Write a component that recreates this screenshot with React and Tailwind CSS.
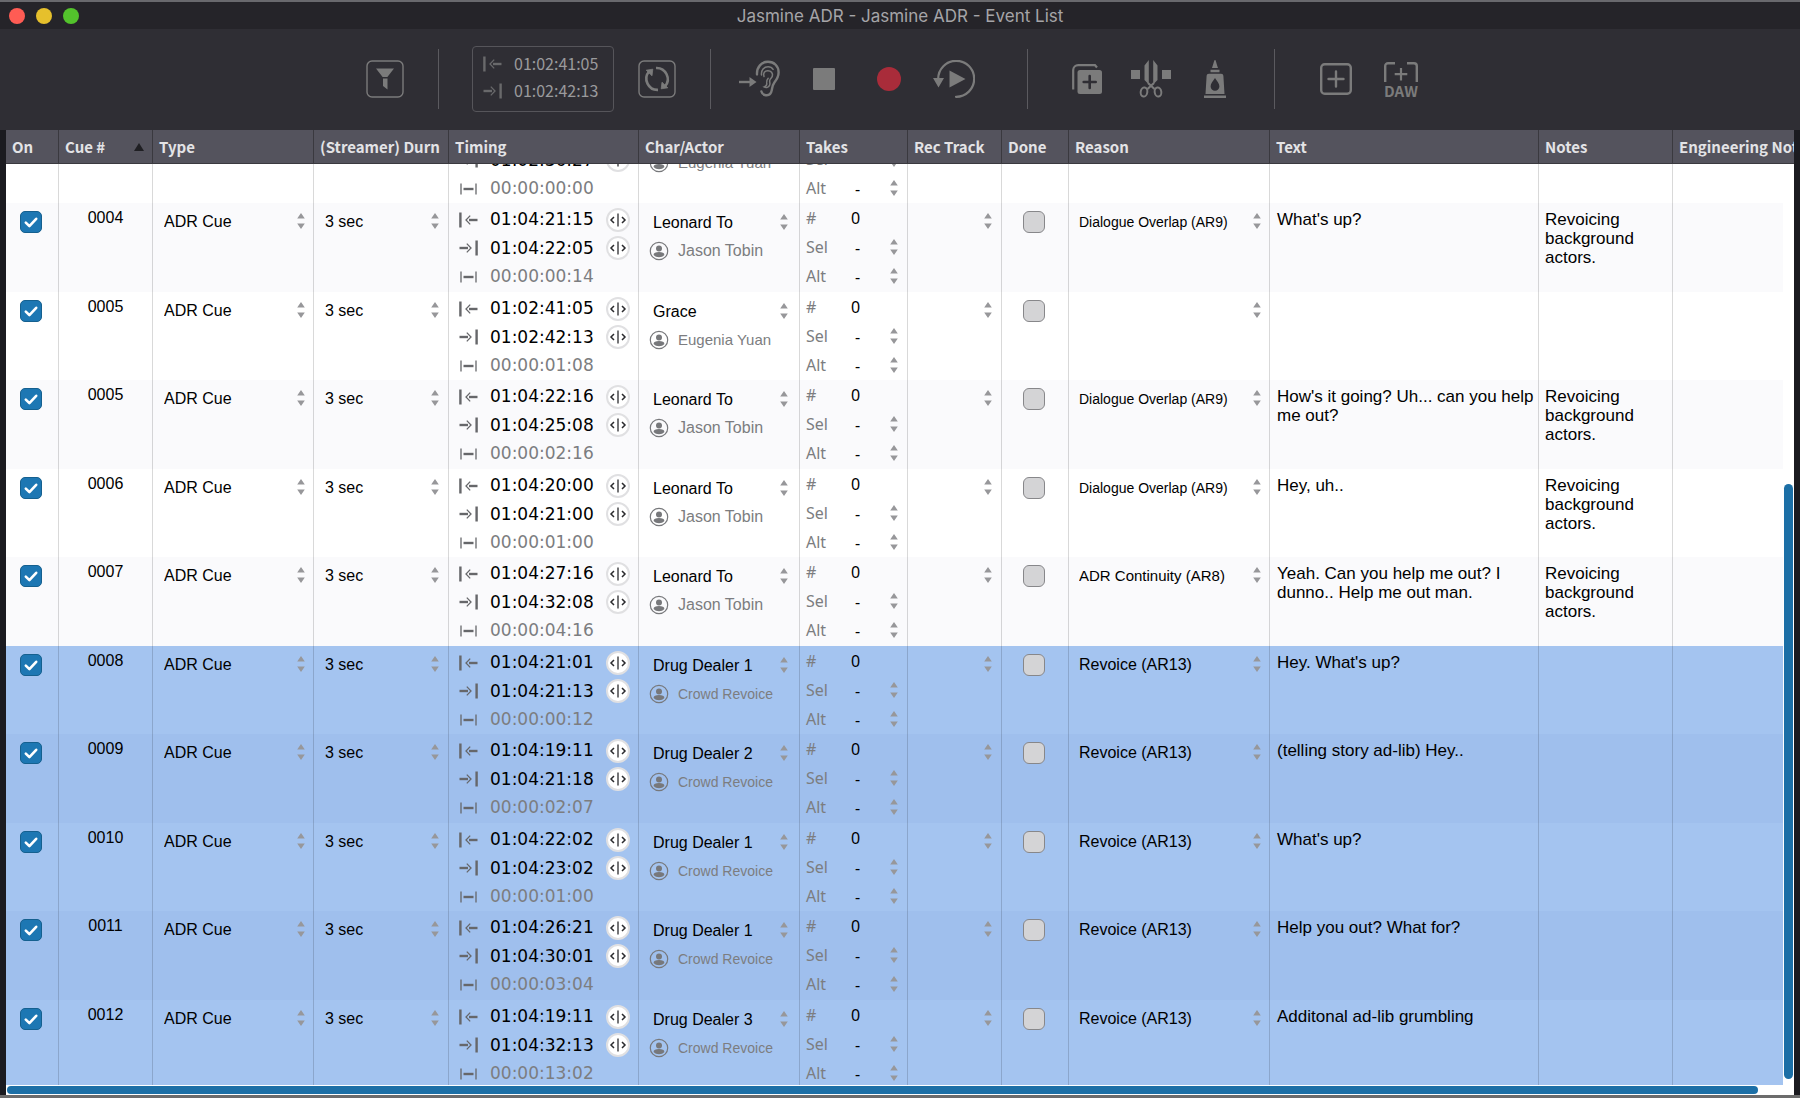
import React, { useLayoutEffect, useRef, useState } from 'react'

const COLUMNS = [
  { name: 'On', width: 'w-[53px]' },
  { name: 'Cue #', width: 'w-[94px]', sorted: true },
  { name: 'Type', width: 'w-[161px]' },
  { name: '(Streamer) Durn', width: 'w-[135px]' },
  { name: 'Timing', width: 'w-[190px]' },
  { name: 'Char/Actor', width: 'w-[161px]' },
  { name: 'Takes', width: 'w-[108px]' },
  { name: 'Rec Track', width: 'w-[94px]' },
  { name: 'Done', width: 'w-[67px]' },
  { name: 'Reason', width: 'w-[201px]' },
  { name: 'Text', width: '' },
  { name: 'Notes', width: 'w-[134px]' },
  { name: 'Engineering Notes', width: 'w-[121px]' }
]

const BACKGROUND = 'Revoicing background actors.'

const CUES = [
  { cue: '0003', start: '01:02:36:27', end: '01:02:36:27', length: '00:00:00:00', character: 'Grace', actor: 'Eugenia Yuan', reason: '', text: '', notes: '' },
  { cue: '0004', start: '01:04:21:15', end: '01:04:22:05', length: '00:00:00:14', character: 'Leonard To', actor: 'Jason Tobin', reason: 'Dialogue Overlap (AR9)', text: "What's up?", notes: BACKGROUND },
  { cue: '0005', start: '01:02:41:05', end: '01:02:42:13', length: '00:00:01:08', character: 'Grace', actor: 'Eugenia Yuan', reason: '', text: '', notes: '' },
  { cue: '0005', start: '01:04:22:16', end: '01:04:25:08', length: '00:00:02:16', character: 'Leonard To', actor: 'Jason Tobin', reason: 'Dialogue Overlap (AR9)', text: "How's it going? Uh... can you help me out?", notes: BACKGROUND },
  { cue: '0006', start: '01:04:20:00', end: '01:04:21:00', length: '00:00:01:00', character: 'Leonard To', actor: 'Jason Tobin', reason: 'Dialogue Overlap (AR9)', text: 'Hey, uh..', notes: BACKGROUND },
  { cue: '0007', start: '01:04:27:16', end: '01:04:32:08', length: '00:00:04:16', character: 'Leonard To', actor: 'Jason Tobin', reason: 'ADR Continuity (AR8)', text: 'Yeah. Can you help me out? I dunno.. Help me out man.', notes: BACKGROUND },
  { cue: '0008', start: '01:04:21:01', end: '01:04:21:13', length: '00:00:00:12', character: 'Drug Dealer 1', actor: 'Crowd Revoice', reason: 'Revoice (AR13)', text: "Hey. What's up?", notes: '', selected: true },
  { cue: '0009', start: '01:04:19:11', end: '01:04:21:18', length: '00:00:02:07', character: 'Drug Dealer 2', actor: 'Crowd Revoice', reason: 'Revoice (AR13)', text: '(telling story ad-lib) Hey..', notes: '', selected: true },
  { cue: '0010', start: '01:04:22:02', end: '01:04:23:02', length: '00:00:01:00', character: 'Drug Dealer 1', actor: 'Crowd Revoice', reason: 'Revoice (AR13)', text: "What's up?", notes: '', selected: true },
  { cue: '0011', start: '01:04:26:21', end: '01:04:30:01', length: '00:00:03:04', character: 'Drug Dealer 1', actor: 'Crowd Revoice', reason: 'Revoice (AR13)', text: 'Help you out? What for?', notes: '', selected: true },
  { cue: '0012', start: '01:04:19:11', end: '01:04:32:13', length: '00:00:13:02', character: 'Drug Dealer 3', actor: 'Crowd Revoice', reason: 'Revoice (AR13)', text: 'Additonal ad-lib grumbling', notes: '', selected: true }
]

function fitSize(text, limit) {
  const over = text.length - limit
  if (over <= 1) return 'text-base'
  if (over === 2) return 'text-[15px]'
  return 'text-sm'
}

function Stepper() {
  return (
    <svg className="w-2 h-4 text-[#97979a]" viewBox="0 0 8 16" fill="currentColor">
      <path d="M4 0l3.8 5.6H.2zM4 16l3.8-5.6H.2z" />
    </svg>
  )
}

function Picker({ label, value, size = 'text-base', className = '' }) {
  return (
    <span className={`grid items-center ${className}`}>
      <select
        aria-label={label}
        defaultValue={value}
        className={`[grid-area:1/1] w-full h-[22px] pt-[2px] appearance-none bg-transparent outline-none leading-5 text-black ${size}`}
      >
        <option>{value}</option>
      </select>
      <span className="[grid-area:1/1] justify-self-end pointer-events-none"><Stepper /></span>
    </span>
  )
}

function OnBox({ label }) {
  return (
    <span className="grid w-[22px] h-[22px] place-items-center">
      <input type="checkbox" defaultChecked aria-label={label} className="peer [grid-area:1/1] appearance-none w-[22px] h-[22px] rounded-[5px] border border-[#15608f] bg-[#d4d4d6] checked:bg-[#1d77b3]" />
      <svg className="[grid-area:1/1] w-4 h-4 pointer-events-none opacity-0 peer-checked:opacity-100" viewBox="0 0 16 16" fill="none" stroke="white" strokeWidth="2.6" strokeLinecap="round" strokeLinejoin="round">
        <path d="M2.8 8.6l3.6 3.6 6.8-7.4" />
      </svg>
    </span>
  )
}

function StartIcon({ className = '' }) {
  return (
    <svg className={`w-[19px] h-4 ${className}`} viewBox="0 0 19 16" fill="none" stroke="currentColor">
      <path d="M1.4 0.5v15" strokeWidth="2.4" />
      <path d="M11.2 3.6L7 8l4.200 4.400" strokeWidth="1.3" />
      <path d="M10 8h8.500" strokeWidth="2.4" />
    </svg>
  )
}

function EndIcon({ className = '' }) {
  return (
    <svg className={`w-[19px] h-4 ${className}`} viewBox="0 0 19 16" fill="none" stroke="currentColor">
      <path d="M17.600 0.500v15" strokeWidth="2.400" />
      <path d="M7.800 3.600L12 8l-4.200 4.400" strokeWidth="1.300" />
      <path d="M0.500 8h8.500" strokeWidth="2.400" />
    </svg>
  )
}

function LengthIcon() {
  return (
    <svg className="w-[19px] h-4 text-[#66676a]" viewBox="0 0 19 16" fill="none" stroke="currentColor">
      <path d="M2 2.500v11M17 2.500v11" strokeWidth="1.300" />
      <path d="M4.500 8h10" strokeWidth="2.400" />
    </svg>
  )
}

function CaptureButton({ label }) {
  return (
    <button type="button" aria-label={label} className="ml-auto w-6 h-6 rounded-full border-2 border-[#e0e0e2] bg-white text-[#2b2b2e]">
      <svg className="w-5 h-5" viewBox="0 0 20 20" fill="none" stroke="currentColor">
        <path d="M10 3.5v13" strokeWidth="1.3" />
        <path d="M6 7L3 10l3 3M14 7l3 3-3 3" strokeWidth="1.5" />
      </svg>
    </button>
  )
}

function ActorIcon() {
  return (
    <svg className="w-5 h-5 shrink-0 text-[#77787b]" viewBox="0 0 20 20">
      <circle cx="10" cy="10" r="8.7" fill="none" stroke="currentColor" strokeWidth="1.2" />
      <circle cx="10" cy="7.4" r="3" fill="currentColor" />
      <path d="M4.600 14c0-2.200 2-3 5.400-3s5.400.8 5.400 3c-1.400 1.500-3.200 2.200-5.400 2.200S6 15.500 4.600 14z" fill="currentColor" />
    </svg>
  )
}

function CueRow({ cue }) {
  const cell = 'p-0 align-top border-r border-black/15'
  const rowColor = cue.selected
    ? 'odd:bg-[#a4c4f0] even:bg-[#9fbfed]'
    : 'odd:bg-white even:bg-[#fafafc]'
  return (
    <tr className={`even:h-[89px] odd:h-[88px] ${rowColor}`}>
      <td className={cell}>
        <div className="pt-2 pl-[14px]"><OnBox label={`Cue ${cue.cue} on`} /></div>
      </td>
      <td className={`${cell} text-center`}>
        <div className="pt-[3px] leading-6">{cue.cue}</div>
      </td>
      <td className={cell}>
        <Picker label="Type" value="ADR Cue" className="pt-[7px] pl-[11px] pr-2" />
      </td>
      <td className={cell}>
        <Picker label="Streamer duration" value="3 sec" className="pt-[7px] pl-[11px] pr-[9px]" />
      </td>
      <td className={cell}>
        <div className="grid grid-rows-3 h-[88px] pt-[3px] pl-[10px] pr-3 font-['DejaVu_Sans',sans-serif] text-[17px]">
          <div className="flex items-center gap-3">
            <StartIcon className="text-[#66676a]" />
            <span>{cue.start}</span>
            <CaptureButton label="Capture start" />
          </div>
          <div className="flex items-center gap-3">
            <EndIcon className="text-[#66676a]" />
            <span>{cue.end}</span>
            <CaptureButton label="Capture end" />
          </div>
          <div className="flex items-center gap-3">
            <LengthIcon />
            <span className="text-[#7c7d80]">{cue.length}</span>
          </div>
        </div>
      </td>
      <td className={cell}>
        <Picker label="Character" value={cue.character} className="pt-2 pl-[14px] pr-[11px]" />
        <div className="flex items-center gap-[9px] pt-2 pl-[10px] text-[#7c7d80]">
          <ActorIcon />
          <span className={`leading-5 whitespace-nowrap ${fitSize(cue.actor, 10)}`}>{cue.actor}</span>
        </div>
      </td>
      <td className={cell}>
        <div className="grid grid-rows-3 h-[88px] pb-px pl-[6px] pr-[9px] font-['Noto_Sans',sans-serif] text-[#7c7d80]">
          <div className="flex items-center">
            <span className="w-[45px]">#</span>
            <span className="text-black">0</span>
          </div>
          <div className="flex items-center">
            <span className="w-[49px]">Sel</span>
            <Picker label="Selected take" value="-" className="flex-1" />
          </div>
          <div className="flex items-center">
            <span className="w-[49px]">Alt</span>
            <Picker label="Alternate take" value="-" className="flex-1" />
          </div>
        </div>
      </td>
      <td className={cell}>
        <Picker label="Record track" value="" className="pt-[7px] pl-2 pr-[9px]" />
      </td>
      <td className={cell}>
        <div className="pt-2 pl-[21px]">
          <input type="checkbox" aria-label={`Cue ${cue.cue} done`} className="block appearance-none w-[22px] h-[22px] rounded-md border border-[#87878a] bg-[#d4d4d6] checked:bg-[#1d77b3]" />
        </div>
      </td>
      <td className={cell}>
        <Picker label="Reason" value={cue.reason} size={fitSize(cue.reason, 18)} className="pt-[7px] pl-[10px] pr-2" />
      </td>
      <td className={cell}>
        <p className="pt-[7px] pl-[7px] text-[17px] leading-[19px]">{cue.text}</p>
      </td>
      <td className={cell}>
        <p className="pt-[7px] pl-[6px] pr-4 text-[17px] leading-[19px]">{cue.notes}</p>
      </td>
      <td className="p-0"></td>
    </tr>
  )
}

function ToolButton({ label, children }) {
  return (
    <button type="button" aria-label={label} title={label} className="w-[42px] h-[42px] flex items-center justify-center">
      {children}
    </button>
  )
}

function Divider({ className }) {
  return <div className={`w-px h-[60px] bg-[#5b5a5f] ${className}`}></div>
}

function Toolbar() {
  return (
    <div className="h-[101px] shrink-0 bg-[#2f2e34] text-[#7b7b7b] flex items-center justify-center pr-[14px] pb-px">
      <ToolButton label="Filter">
        <svg className="w-[38px] h-[38px]" viewBox="0 0 38 38">
          <rect x="1" y="1" width="36" height="36" rx="5" fill="none" stroke="currentColor" strokeWidth="1.4" />
          <path d="M10 8.500h18l-6.600 8.500h-4.800zM17 18.500h4.500v11l-4.500-3.500z" fill="currentColor" />
        </svg>
      </ToolButton>
      <Divider className="ml-8 mr-[33px]" />
      <div className="w-[142px] h-[66px] rounded border border-[#56555a] flex flex-col justify-center pl-[10px] pb-1 font-['Noto_Sans_CJK_SC',sans-serif] text-base leading-[27px] text-[#9a9a9c]">
        <div className="flex items-center gap-3">
          <StartIcon className="text-[#69696b]" />
          <span>01:02:41:05</span>
        </div>
        <div className="flex items-center gap-3">
          <EndIcon className="text-[#69696b]" />
          <span>01:02:42:13</span>
        </div>
      </div>
      <div className="ml-[22px]">
        <ToolButton label="Refresh">
          <svg className="w-[38px] h-[38px]" viewBox="0 0 38 38" fill="none" stroke="currentColor">
            <rect x="1" y="1" width="36" height="36" rx="5" strokeWidth="1.4" />
            <path d="M20 29.900A11.200 11.200 0 0 1 11 11.500M18 8A11.200 11.200 0 0 1 27 26.500" strokeWidth="2.600" />
            <path d="M8.200 10.200l6.600-1-.8 6.600zM29.800 27.800l-6.600 1 .8-6.600z" fill="currentColor" strokeWidth="0.800" />
          </svg>
        </ToolButton>
      </div>
      <Divider className="ml-8 mr-[27px]" />
      <div className="flex gap-[23px]">
        <ToolButton label="Listen">
          <svg className="w-[42px] h-[38px]" viewBox="0 0 42 38" fill="none" stroke="currentColor" strokeLinecap="round">
            <path d="M1 22h12" strokeWidth="2.400" strokeLinecap="butt" />
            <path d="M11.500 17l7 5-7 5z" fill="currentColor" stroke="none" />
            <path d="M19 14.500C18.600 7 23.500 1.800 30 1.800c6.200 0 10.600 4.400 10.600 10.600 0 4.600-2 7.200-4.200 10-1.800 2.300-2 4.600-2.600 7.600-.7 3.800-3 5.600-6 5.200-2.400-.3-4-1.700-4.400-3.800" strokeWidth="2.400" />
            <path d="M23.500 15c-.6-5 2.600-8.200 6.600-8.200 2.200 0 4 .9 5 2.600" strokeWidth="1.500" />
            <path d="M26 16.500c-1.200-3.500.8-5.800 3.800-5.800 3.200 0 5.400 2.300 4.500 5.600-.5 1.800-2.400 2.300-2.600 4.200-.2 2 .7 2.600 0 4.600-.8 2.200-3.500 3.200-5.600 1.800 2.600-.8 3-2.200 2.600-4.200-.3-2 .4-3.200 1.500-4.400" strokeWidth="1.500" />
          </svg>
        </ToolButton>
        <ToolButton label="Stop"><span className="w-[22px] h-[22px] rounded-[1px] bg-[#7b7b7b]"></span></ToolButton>
        <ToolButton label="Record"><span className="w-6 h-6 rounded-full bg-[#a92c3a]"></span></ToolButton>
        <ToolButton label="Replay">
          <svg className="w-[42px] h-[38px]" viewBox="0 0 42 38" fill="none" stroke="currentColor">
            <path d="M5.200 19A18 18 0 1 1 23 36.800" strokeWidth="2.200" strokeLinecap="round" />
            <path d="M0 18h11l-5.500 9.500zM16.500 10.500l16 8.500-16 8.500z" fill="currentColor" stroke="none" />
          </svg>
        </ToolButton>
      </div>
      <Divider className="ml-[52px] mr-[38px]" />
      <div className="flex gap-[22px]">
        <ToolButton label="Duplicate">
          <svg className="w-[30px] h-[30px]" viewBox="0 0 30 30" fill="none" stroke="currentColor">
            <path d="M1.200 25.500V6a5 5 0 0 1 5-4.800H23l2 2.200" strokeWidth="2.200" />
            <rect x="5.500" y="6" width="24.500" height="24" rx="2.500" fill="currentColor" stroke="none" />
            <path d="M17.700 12v12M11.700 18h12" stroke="#2f2e34" strokeWidth="2.600" strokeLinecap="round" />
          </svg>
        </ToolButton>
        <ToolButton label="Cut">
          <svg className="w-[42px] h-[38px]" viewBox="0 0 42 38" fill="none" stroke="currentColor">
            <path d="M1 10h9v9H1zM32 10h9v9h-9zM18.800 0v24.500l-4.300-4.500V5.500zM23.200 0v24.500l4.300-4.500V5.500z" fill="currentColor" stroke="none" />
            <path d="M18 23l6.500 6M24 23l-6.500 6" strokeWidth="2.200" />
            <ellipse cx="14" cy="32" rx="3.300" ry="4.600" strokeWidth="2" transform="rotate(10 14 32)" />
            <ellipse cx="28" cy="32" rx="3.300" ry="4.600" strokeWidth="2" transform="rotate(-10 28 32)" />
          </svg>
        </ToolButton>
        <ToolButton label="Glue">
          <svg className="w-[22px] h-[38px]" viewBox="0 0 22 38" fill="currentColor">
            <path d="M11 0c.8 0 .8 1.500 3 8h-6c2.200-6.500 2.200-8 3-8zM6.500 9.800h9v2.400h-9zM5 13.800h12c1.600 0 2.200.7 2.400 2.200l1.100 18h-19L2.600 16c.2-1.500.8-2.200 2.400-2.200zM0 35.600h22V38H0z" />
            <path d="M11 18c2 3.200 4.400 5.500 4.400 8.300a4.400 4.400 0 0 1-8.800 0C6.600 23.500 9 21.200 11 18z" fill="#2f2e34" />
          </svg>
        </ToolButton>
      </div>
      <Divider className="ml-[38px] mr-10" />
      <div className="flex items-center gap-[23px]">
        <ToolButton label="Add">
          <svg className="w-8 h-8" viewBox="0 0 32 32" fill="none" stroke="currentColor">
            <rect x="1.200" y="1.200" width="29.600" height="29.600" rx="3.500" strokeWidth="2.400" />
            <path d="M16 8.500v15M8.500 16h15" strokeWidth="2.400" strokeLinecap="round" />
          </svg>
        </ToolButton>
        <button type="button" title="Add from DAW" className="w-[42px] pt-1 flex flex-col items-center">
          <svg className="w-[34px] h-5" viewBox="0 0 34 20" fill="none" stroke="currentColor">
            <path d="M1.200 20V4a2.800 2.800 0 0 1 2.800-2.800h7M32.800 20V4a2.800 2.800 0 0 0-2.800-2.800h-7" strokeWidth="2.400" />
            <path d="M17 6v12.500M10.700 12.200h12.600" strokeWidth="2.200" />
          </svg>
          <span className="font-['Noto_Sans_CJK_SC',sans-serif] font-bold text-[15px] leading-[18px]">DAW</span>
        </button>
      </div>
    </div>
  )
}

export default function App() {
  const [cues] = useState(CUES)
  const listRef = useRef(null)

  useLayoutEffect(() => {
    listRef.current.scrollTop = 49
  }, [])

  return (
    <div className="h-screen flex flex-col bg-[#1b1b20] font-['Liberation_Sans',Arial,sans-serif] text-base text-black overflow-hidden border-b-[3px] border-[#6c6c6c]">
      <header className="h-[29px] shrink-0 bg-[#252429] border-t-2 border-[#69696d] grid grid-cols-3 items-center">
        <div className="flex gap-[11px] pl-[9px]">
          <button type="button" aria-label="Close" className="w-4 h-4 rounded-full bg-[#ff5c54]"></button>
          <button type="button" aria-label="Minimize" className="w-4 h-4 rounded-full bg-[#e6c02c]"></button>
          <button type="button" aria-label="Zoom" className="w-4 h-4 rounded-full bg-[#53c32c]"></button>
        </div>
        <h1 className="text-center whitespace-nowrap font-['Inter',sans-serif] text-[17px] leading-6 text-[#a5a5a8]">Jasmine ADR - Jasmine ADR - Event List</h1>
      </header>
      <Toolbar />
      <main className="flex-1 min-h-0 mx-[6px] grid grid-rows-[1fr_10px] bg-white">
        <div className="min-h-0 grid grid-cols-[1fr_11px]">
          <div ref={listRef} className="[grid-area:1/1/2/3] min-h-0 overflow-y-auto overflow-x-hidden [scrollbar-width:none]">
            <table className="w-full table-fixed border-separate border-spacing-0">
              <thead>
                <tr>
                  {COLUMNS.map(column => (
                    <th key={column.name} scope="col" className={`sticky top-0 z-10 p-0 h-[34px] overflow-hidden bg-[#54535d] border-r border-b border-[#3a393f] last:border-r-0 text-left font-['Noto_Sans_CJK_SC',sans-serif] font-bold text-[15px] leading-6 text-[#e3e3e6] whitespace-nowrap ${column.width}`}>
                      <div className="flex items-center justify-between pl-[6px] pr-2">
                        {column.name}
                        {column.sorted && (
                          <svg className="w-[10px] h-2 text-[#1f1f23]" viewBox="0 0 10 8" fill="currentColor"><path d="M5 0l5 8H0z" /></svg>
                        )}
                      </div>
                    </th>
                  ))}
                </tr>
              </thead>
              <tbody>
                {cues.map((cue, i) => <CueRow key={i} cue={cue} />)}
              </tbody>
            </table>
          </div>
          <div className="[grid-area:1/2] mt-[34px] bg-white z-10 flex flex-col justify-end px-px pb-[6px]">
            <div className="h-[65%] rounded-full bg-[#1c6fa6]"></div>
          </div>
        </div>
        <div className="py-px pl-px pr-9">
          <div className="h-2 rounded-full bg-[#1c6fa6]"></div>
        </div>
      </main>
    </div>
  )
}
